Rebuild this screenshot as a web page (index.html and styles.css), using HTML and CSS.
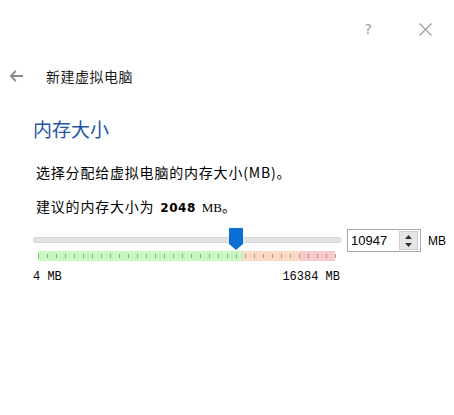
FILE: index.html
```html
<!DOCTYPE html>
<html lang="zh-CN">
<head>
<meta charset="utf-8">
<link rel="stylesheet" href="styles.css">
</head>
<body>
<div class="window">
  <div class="titlebar">
    <span class="help">?</span>
    <svg class="close" width="13" height="13" viewBox="0 0 13 13"><path d="M0.5 0.5L12.5 12.5M12.5 0.5L0.5 12.5" stroke="#9a9a9a" stroke-width="1.1" fill="none"/></svg>
  </div>
  <div class="header">
    <svg class="back" width="15" height="12" viewBox="0 0 15 12"><path d="M14 6H1.8M6.8 1L1.8 6L6.8 11" stroke="#8a8a8a" stroke-width="1.8" fill="none"/></svg>
    <span class="wizard-title">新建虚拟电脑</span>
  </div>
  <div class="content">
    <h1 class="page-title">内存大小</h1>
    <p class="desc first">选择分配给虚拟电脑的内存大小(MB)。</p>
    <p class="desc">建议的内存大小为 <b class="num">2048</b> <span class="mb">MB</span>。</p>
    <div class="slider-row">
      <div class="slider">
        <div class="track"></div>
        <svg class="thumb" width="14" height="22" viewBox="0 0 14 22"><path d="M1 0H13Q14 0 14 1V16L7 22L0 16V1Q0 0 1 0Z" fill="#0a6fd4"/></svg>
        <div class="ticks">
          <div class="zone green"></div>
          <div class="zone orange"></div>
          <div class="zone red"></div>
        </div>
        <div class="labels">
          <span>4 MB</span>
          <span>16384 MB</span>
        </div>
      </div>
      <div class="spinbox">
        <span class="value">10947</span>
        <div class="spin">
          <svg width="9" height="16" viewBox="0 0 9 16"><path d="M1 6L4.5 2L8 6Z M1 10L4.5 14L8 10Z" fill="#333"/></svg>
        </div>
      </div>
      <span class="unit">MB</span>
    </div>
  </div>
</div>
</body>
</html>
```
FILE: styles.css
```css
html, body {
  margin: 0;
  padding: 0;
  background: #ffffff;
}
body {
  font-family: "Noto Sans CJK SC", "Noto Sans", sans-serif;
  color: #000;
  width: 454px;
  height: 415px;
  overflow: hidden;
}
.window {
  display: flex;
  flex-direction: column;
}
.titlebar {
  height: 58px;
  display: flex;
  align-items: center;
  justify-content: flex-end;
  padding-right: 22px;
  gap: 47px;
}
.help {
  font-family: "DejaVu Sans", sans-serif;
  font-size: 14px;
  color: #9a9a9a;
  line-height: 1;
}
.header {
  display: flex;
  align-items: center;
  padding-left: 9px;
  height: 36px;
  gap: 22px;
}
.wizard-title {
  font-size: 14px;
  color: #1a1a1a;
  letter-spacing: 0.5px;
}
.content {
  padding-left: 33px;
}
.page-title {
  margin: 20px 0 0 0;
  font-size: 19px;
  font-weight: normal;
  color: #1e56a6;
  line-height: 30px;
}
.desc {
  margin: 0;
  margin-left: 3px;
  font-size: 14px;
  line-height: 34px;
  letter-spacing: 0.8px;
}
.desc.first {
  margin-top: 11px;
}
.num {
  font-family: "DejaVu Sans", sans-serif;
  font-weight: bold;
  font-size: 12px;
  letter-spacing: 0.5px;
  margin: 0 2px;
}
.mb {
  font-family: "Liberation Serif", serif;
  font-size: 13px;
  letter-spacing: 0;
}
.slider-row {
  display: flex;
  align-items: flex-start;
  margin-top: 1px;
}
.slider {
  position: relative;
  width: 308px;
}
.track {
  margin-top: 11px;
  height: 4px;
  border-radius: 2px;
  background: #e2e2e2;
  border: 1px solid #d6d6d6;
}
.thumb {
  position: absolute;
  left: 196px;
  top: 2px;
}
.ticks {
  margin: 8px 5px 0 5px;
  height: 10px;
  display: flex;
  position: relative;
}
.ticks::after {
  content: "";
  position: absolute;
  inset: 3px 0;
  background: repeating-linear-gradient(90deg, #6a8a6a 0 1px, transparent 1px 9px);
  opacity: 0.7;
}
.zone {
  height: 100%;
}
.green { width: 205px; background: #c8f6c3; }
.orange { width: 57px; background: #fcd9c5; }
.red { width: 35px; background: #fcc6cd; }
.labels {
  display: flex;
  justify-content: space-between;
  font-family: "Liberation Mono", monospace;
  font-size: 12px;
  margin-top: 9px;
  padding-right: 1px;
}
.spinbox {
  box-sizing: border-box;
  margin-left: 6px;
  margin-top: 3px;
  width: 74px;
  height: 23px;
  border: 1px solid #a8a8a8;
  display: flex;
  align-items: center;
  justify-content: space-between;
}
.value {
  font-family: "Liberation Sans", sans-serif;
  font-size: 13px;
  padding-left: 3px;
}
.spin {
  width: 17px;
  height: 17px;
  margin-right: 2px;
  background: #e6e6e6;
  border: 1px solid #cfcfcf;
  display: flex;
  align-items: center;
  justify-content: center;
}
.unit {
  font-family: "Liberation Sans", sans-serif;
  font-size: 12px;
  margin-left: 7px;
  margin-top: 8px;
}
```
